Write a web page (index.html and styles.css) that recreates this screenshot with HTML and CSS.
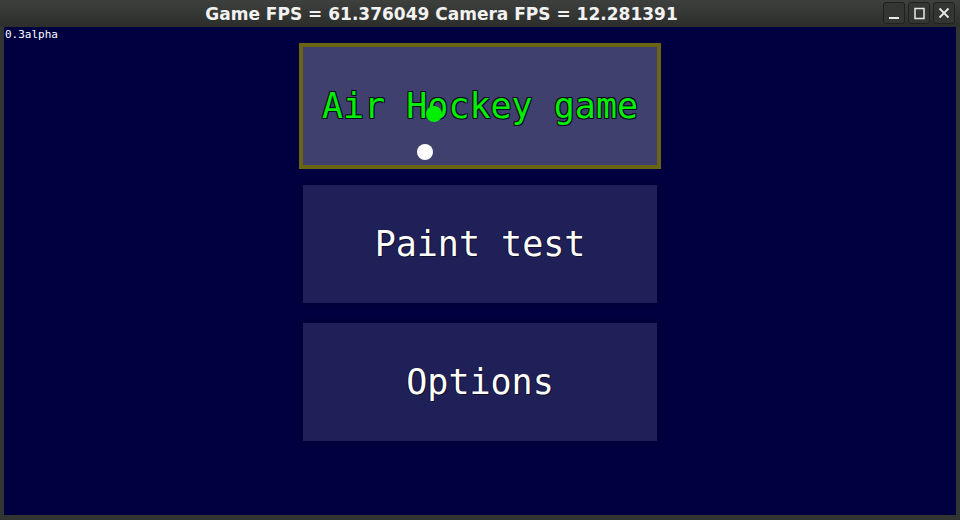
FILE: index.html
```html
<!DOCTYPE html>
<html>
<head>
<meta charset="utf-8">
<link rel="stylesheet" href="styles.css">
</head>
<body>
<div class="window">
  <div class="titlebar">
    <div class="title">Game FPS = 61.376049 Camera FPS = 12.281391</div>
    <div class="controls">
      <div class="ctl"><svg width="14" height="14" viewBox="0 0 14 14"><rect x="2" y="11" width="10" height="2" fill="#e8e8e8"/></svg></div>
      <div class="ctl"><svg width="14" height="14" viewBox="0 0 14 14"><rect x="3" y="2.5" width="9" height="10" fill="none" stroke="#e8e8e8" stroke-width="1.5"/></svg></div>
      <div class="ctl"><svg width="14" height="14" viewBox="0 0 14 14"><path d="M2.5 2.5 L11.5 11.5 M11.5 2.5 L2.5 11.5" stroke="#e8e8e8" stroke-width="1.8"/></svg></div>
    </div>
  </div>
  <div class="content">
    <div class="version">0.3alpha</div>
    <div class="menu">
      <div class="btn active">Air Hockey game</div>
      <div class="btn">Paint test</div>
      <div class="btn">Options</div>
    </div>
    <div class="dot green"></div>
    <div class="dot white"></div>
  </div>
</div>
</body>
</html>
```

FILE: styles.css
```css
html, body {
  margin: 0;
  padding: 0;
  width: 960px;
  height: 520px;
  overflow: hidden;
  background: #303230;
}
.window {
  width: 960px;
  height: 520px;
  display: flex;
  flex-direction: column;
  background: #333533;
}
.titlebar {
  height: 27px;
  flex: none;
  display: flex;
  align-items: center;
  padding-right: 5px;
  background: linear-gradient(#3d403d, #2c2e2c);
}
.title {
  flex: 1;
  text-align: center;
  font-family: "DejaVu Sans", sans-serif;
  font-weight: bold;
  font-size: 17px;
  color: #f2f2f2;
}
.controls {
  display: flex;
  gap: 3px;
  margin-top: -1px;
}
.ctl {
  width: 20px;
  height: 20px;
  border: 1px solid #1f211f;
  border-radius: 3px;
  background: #343634;
  display: flex;
  align-items: center;
  justify-content: center;
}
.content {
  flex: 1;
  margin: 0 4px 5px 4px;
  background: #000040;
  position: relative;
  display: flex;
  justify-content: center;
}
.version {
  position: absolute;
  left: 1px;
  top: 1px;
  font-family: "DejaVu Sans Mono", monospace;
  font-size: 11px;
  color: #ffffff;
}
.menu {
  padding-top: 16px;
  display: flex;
  flex-direction: column;
  gap: 12px;
}
.btn {
  width: 354px;
  height: 118px;
  border: 4px solid #00003a;
  background: #202058;
  display: flex;
  align-items: center;
  justify-content: center;
  font-family: "DejaVu Sans Mono", monospace;
  font-size: 35px;
  color: #ffffff;
  text-shadow: 1px 1px 0 #10102a, -1px 0 0 #10102a;
}
.btn.active {
  border-color: #6b6414;
  background: #40406f;
  color: #00f000;
  text-shadow: 1px 1px 0 #0a0a20, -1px -1px 0 #0a0a20, 1px -1px 0 #0a0a20, -1px 1px 0 #0a0a20;
}
.dot {
  position: absolute;
  width: 16px;
  height: 16px;
  border-radius: 50%;
}
.dot.green {
  background: #00ee00;
  left: 422px;
  top: 79px;
}
.dot.white {
  background: #ffffff;
  left: 413px;
  top: 117px;
}
```
